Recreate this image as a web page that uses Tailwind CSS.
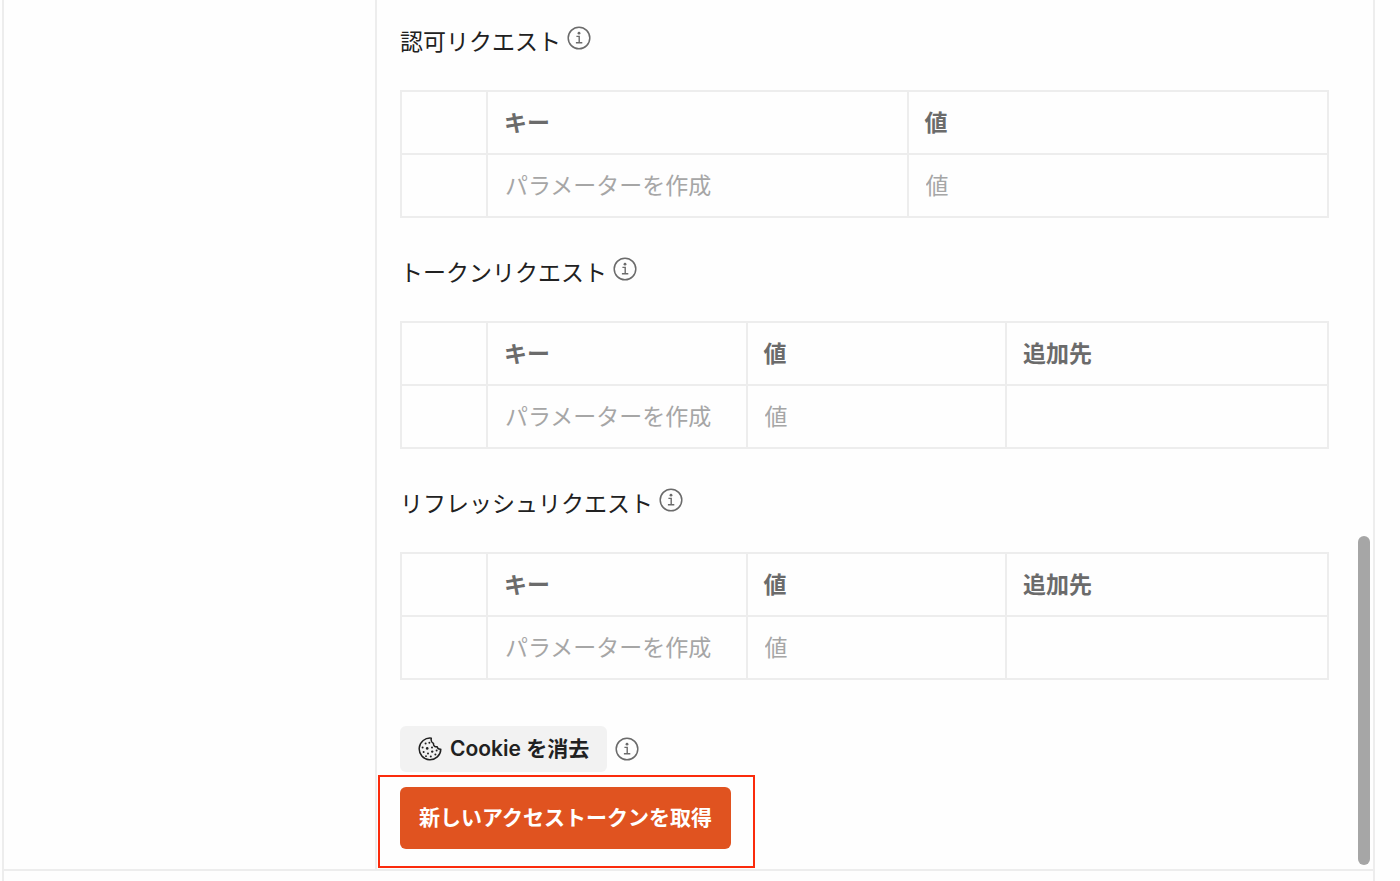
<!DOCTYPE html>
<html lang="ja">
<head>
<meta charset="utf-8">
<meta name="viewport" content="width=device-width, initial-scale=1">
<title>アクセストークン</title>
<script src="https://cdn.jsdelivr.net/npm/@tailwindcss/browser@4"></script>
</head>
<body class="min-h-screen bg-[#fefefe] font-[Inter,'Noto_Sans_CJK_JP',sans-serif] text-[23px] leading-8 text-[#212121]">
<svg class="hidden" aria-hidden="true">
  <symbol id="info" viewBox="0 0 24 24" fill="none" stroke="currentColor">
    <circle cx="12" cy="12" r="10.8" stroke-width="1.5"/>
    <path d="M9.4 10.4h2.8v6.2M8.9 16.7h6.4" stroke-width="1.4"/>
    <circle cx="12" cy="7.2" r="1.4" fill="currentColor" stroke="none"/>
  </symbol>
  <symbol id="cookie" viewBox="0 0 24 24" fill="none" stroke="currentColor">
    <path d="M13.3 1.2A10.8 10.8 0 1 0 22.8 12.2c-1.9.2-3.3-.6-3.6-2.4-2.4.3-3.9-1-3.7-3.3-1.9-.9-2.7-2.9-2.2-5.3Z" stroke-width="1.5" stroke-linejoin="round"/>
    <g fill="currentColor" stroke="none">
      <circle cx="7.6" cy="6.6" r="1"/><circle cx="11.4" cy="5.8" r="1"/><circle cx="4.6" cy="10.6" r="1"/>
      <circle cx="9.2" cy="11.4" r="1.3"/><circle cx="14" cy="10.6" r="1"/><circle cx="5.6" cy="15" r="1"/>
      <circle cx="10" cy="16.4" r="1"/><circle cx="14.2" cy="14.6" r="1.2"/><circle cx="18.6" cy="13.6" r="1"/>
      <circle cx="12.8" cy="19.4" r="1"/><circle cx="17.4" cy="17.4" r="1"/><circle cx="8" cy="19.2" r=".9"/>
    </g>
  </symbol>
</svg>
<div class="ml-[2px] mr-[25px] flex min-h-screen flex-col border-x-2 border-[#ededed]">
  <div class="relative flex border-b-2 border-[#ededed]">
    <aside class="w-[373px] shrink-0 border-r-2 border-[#ededed]"></aside>
    <main class="min-w-0 flex-1 pt-[26px] pr-11 pb-5 pl-[23px]">
      <div class="flex flex-col gap-[39px]">
        <section>
          <div class="mb-8 flex items-start gap-[6px]">
            <h2 id="auth">認可リクエスト</h2>
            <button type="button" aria-label="情報" class="text-[#6b6b6b]"><svg class="size-6"><use href="#info"/></svg></button>
          </div>
          <table aria-labelledby="auth" class="w-full table-fixed border-collapse text-left">
            <thead><tr class="h-[63px] font-bold text-[#6b6b6b]">
              <td class="w-[86px] border-2 border-[#ededed]"></td>
              <th scope="col" class="border-2 border-[#ededed] px-4">キー</th>
              <th scope="col" class="border-2 border-[#ededed] px-4">値</th>
            </tr></thead>
            <tbody><tr class="h-[63px]">
              <td class="border-2 border-[#ededed]"></td>
              <td class="border-2 border-[#ededed] px-[17px]"><input type="text" aria-label="キー" placeholder="パラメーターを作成" class="block w-full outline-none placeholder:text-[#a6a6a6]"></td>
              <td class="border-2 border-[#ededed] px-[17px]"><input type="text" aria-label="値" placeholder="値" class="block w-full outline-none placeholder:text-[#a6a6a6]"></td>
            </tr></tbody>
          </table>
        </section>
        <section>
          <div class="mb-8 flex items-start gap-[6px]">
            <h2 id="token">トークンリクエスト</h2>
            <button type="button" aria-label="情報" class="text-[#6b6b6b]"><svg class="size-6"><use href="#info"/></svg></button>
          </div>
          <table aria-labelledby="token" class="w-full table-fixed border-collapse text-left">
            <thead><tr class="h-[63px] font-bold text-[#6b6b6b]">
              <td class="w-[86px] border-2 border-[#ededed]"></td>
              <th scope="col" class="w-[28%] border-2 border-[#ededed] px-4">キー</th>
              <th scope="col" class="w-[28%] border-2 border-[#ededed] px-4">値</th>
              <th scope="col" class="border-2 border-[#ededed] px-4">追加先</th>
            </tr></thead>
            <tbody><tr class="h-[63px]">
              <td class="border-2 border-[#ededed]"></td>
              <td class="border-2 border-[#ededed] px-[17px]"><input type="text" aria-label="キー" placeholder="パラメーターを作成" class="block w-full outline-none placeholder:text-[#a6a6a6]"></td>
              <td class="border-2 border-[#ededed] px-[17px]"><input type="text" aria-label="値" placeholder="値" class="block w-full outline-none placeholder:text-[#a6a6a6]"></td>
              <td class="border-2 border-[#ededed]"></td>
            </tr></tbody>
          </table>
        </section>
        <section>
          <div class="mb-8 flex items-start gap-[6px]">
            <h2 id="refresh">リフレッシュリクエスト</h2>
            <button type="button" aria-label="情報" class="text-[#6b6b6b]"><svg class="size-6"><use href="#info"/></svg></button>
          </div>
          <table aria-labelledby="refresh" class="w-full table-fixed border-collapse text-left">
            <thead><tr class="h-[63px] font-bold text-[#6b6b6b]">
              <td class="w-[86px] border-2 border-[#ededed]"></td>
              <th scope="col" class="w-[28%] border-2 border-[#ededed] px-4">キー</th>
              <th scope="col" class="w-[28%] border-2 border-[#ededed] px-4">値</th>
              <th scope="col" class="border-2 border-[#ededed] px-4">追加先</th>
            </tr></thead>
            <tbody><tr class="h-[63px]">
              <td class="border-2 border-[#ededed]"></td>
              <td class="border-2 border-[#ededed] px-[17px]"><input type="text" aria-label="キー" placeholder="パラメーターを作成" class="block w-full outline-none placeholder:text-[#a6a6a6]"></td>
              <td class="border-2 border-[#ededed] px-[17px]"><input type="text" aria-label="値" placeholder="値" class="block w-full outline-none placeholder:text-[#a6a6a6]"></td>
              <td class="border-2 border-[#ededed]"></td>
            </tr></tbody>
          </table>
        </section>
      </div>
      <div class="mt-[46px] flex items-center gap-2">
        <button type="button" class="flex items-center gap-2 rounded-md bg-[#f2f2f2] px-[18px] py-[7px] text-[21px] font-semibold"><svg class="size-6"><use href="#cookie"/></svg>Cookie を消去</button>
        <button type="button" aria-label="情報" class="text-[#6b6b6b]"><svg class="size-6"><use href="#info"/></svg></button>
      </div>
      <div class="relative mt-[15px] w-fit">
        <button type="button" class="block rounded-md bg-[#e05320] px-[19px] py-[15px] text-[21px] font-bold text-white">新しいアクセストークンを取得</button>
        <div class="pointer-events-none absolute -top-3 -right-6 -bottom-[19px] -left-[22px] border-2 border-[#fb2b0c]"></div>
      </div>
    </main>
    <div class="absolute right-[3px] bottom-1 h-[329px] w-3 rounded-full bg-[#a6a6a6]"></div>
  </div>
</div>
</body>
</html>
